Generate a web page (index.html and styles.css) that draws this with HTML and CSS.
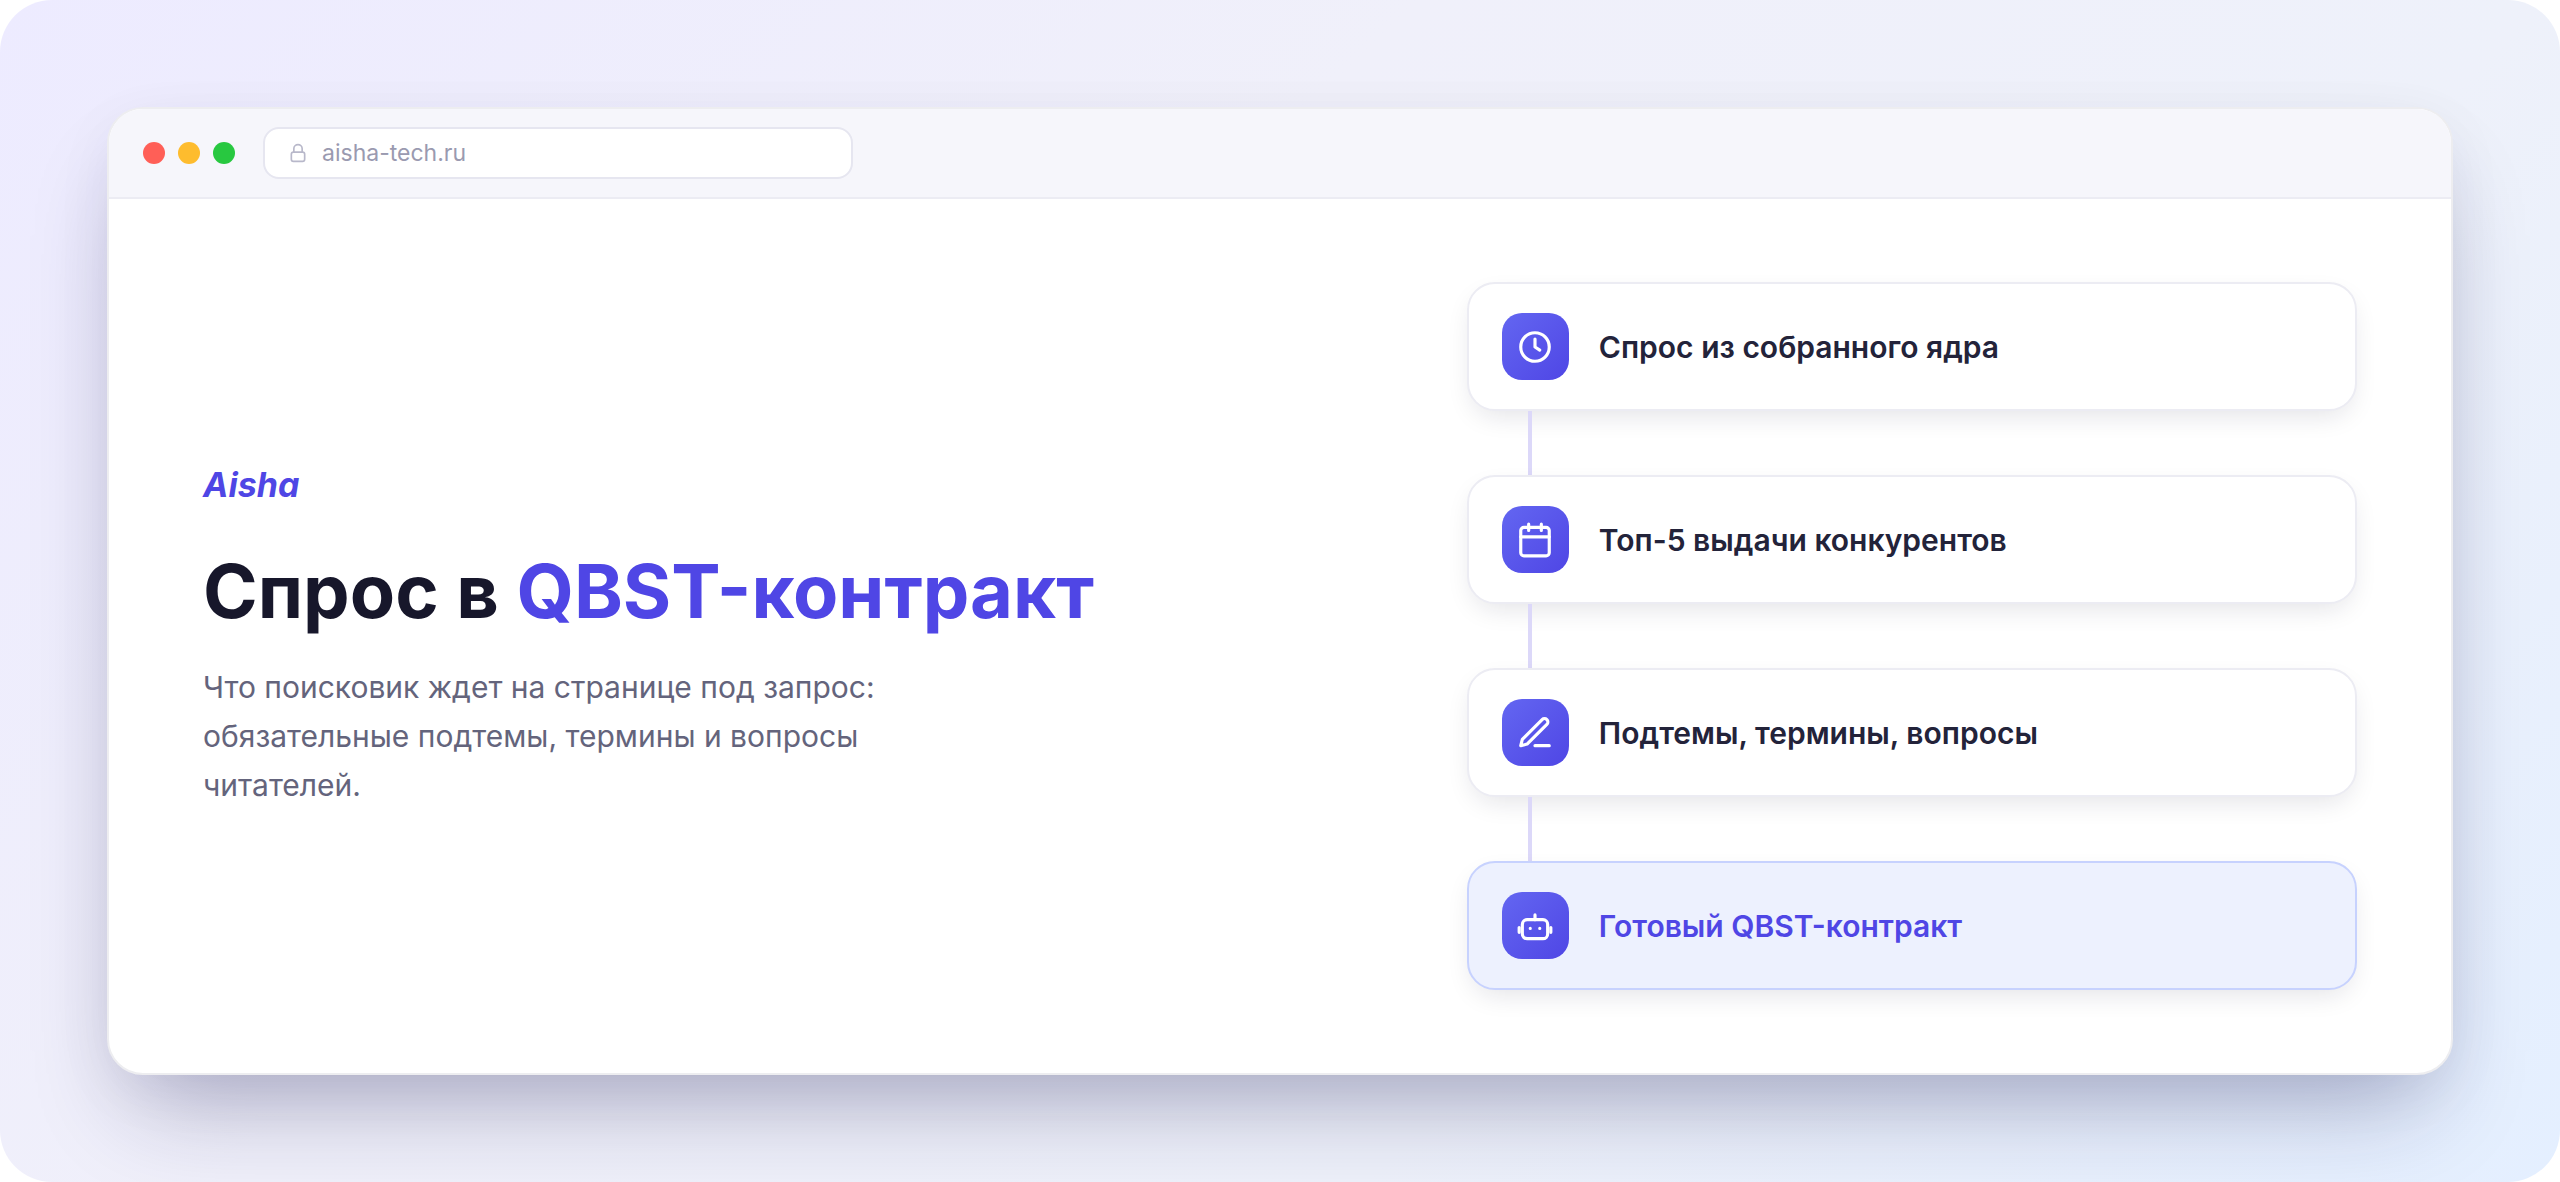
FILE: index.html
```html
<!DOCTYPE html>
<html lang="ru">
<head>
    <meta charset="UTF-8">
    <meta name="viewport" content="width=device-width, initial-scale=1.0">
    <title>Aisha</title>
    <link rel="stylesheet" href="styles.css">
</head>
<body>

    <div class="stage">
        <div class="window">

            <!-- Browser bar -->
            <header class="bar">
                <div class="dots">
                    <span class="dot red"></span>
                    <span class="dot yellow"></span>
                    <span class="dot green"></span>
                </div>
                <div class="address">
                    <svg class="lock" viewBox="0 0 24 24">
                        <rect x="4" y="11" width="16" height="11" rx="2.5"/>
                        <path d="M7 11V7a5 5 0 0 1 10 0v4"/>
                    </svg>
                    <span>aisha-tech.ru</span>
                </div>
            </header>

            <main class="content">
                <!-- Intro -->
                <section class="intro">
                    <p class="brand">Aisha</p>
                    <h1>Спрос в <span>QBST-контракт</span></h1>
                    <p class="lead">Что поисковик ждет на странице под запрос: обязательные подтемы, термины и вопросы читателей.</p>
                </section>

                <!-- Steps -->
                <ol class="steps">
                    <li class="step">
                        <span class="icon">
                            <svg viewBox="0 0 24 24">
                                <circle cx="12" cy="12" r="9"/>
                                <path d="M12 7v5l3 2"/>
                            </svg>
                        </span>
                        <span>Спрос из собранного ядра</span>
                    </li>
                    <li class="step">
                        <span class="icon">
                            <svg viewBox="0 0 24 24">
                                <rect x="3" y="4" width="18" height="18" rx="2"/>
                                <path d="M8 2v4M16 2v4M3 10h18"/>
                            </svg>
                        </span>
                        <span>Топ-5 выдачи конкурентов</span>
                    </li>
                    <li class="step">
                        <span class="icon">
                            <svg viewBox="0 0 24 24">
                                <path d="M12 20h9"/>
                                <path d="M16.500 3.500a2.120 2.120 0 0 1 3 3L7 19l-4 1 1-4z"/>
                            </svg>
                        </span>
                        <span>Подтемы, термины, вопросы</span>
                    </li>
                    <li class="step final">
                        <span class="icon">
                            <svg viewBox="0 0 24 24">
                                <rect x="4" y="8" width="16" height="12" rx="3"/>
                                <path d="M12 8V5M2 13v3M22 13v3M9 13.500v.01M15 13.500v.01"/>
                            </svg>
                        </span>
                        <span>Готовый QBST-контракт</span>
                    </li>
                </ol>
            </main>

        </div>
    </div>

</body>
</html>
```
FILE: styles.css
```css
* {
    margin: 0;
    padding: 0;
    box-sizing: border-box;
}

body {
    font-family: Inter, sans-serif;
    background-color: #fff;
}

.stage {
    display: flex;
    min-height: 100vh;
    padding: 107px;
    border-radius: 52px;
    background: linear-gradient(135deg, #edebff 0%, #f0f0fa 38%, #eef1fa 68%, #e4efff 100%);
    overflow: hidden;
}

.window {
    flex: 1;
    display: flex;
    flex-direction: column;
    border: 2px solid #ededf0;
    border-radius: 36px;
    background-color: #fff;
    box-shadow: 0 52px 100px -28px rgba(24, 24, 80, 0.32), 0 16px 60px rgba(24, 24, 80, 0.05);
}

/* Browser bar */
.bar {
    display: flex;
    align-items: center;
    gap: 28px;
    padding: 18px 34px;
    border-bottom: 2px solid #ececf3;
    border-radius: 34px 34px 0 0;
    background-color: #f6f6fb;
}

.dots {
    display: flex;
    gap: 13px;
}

.dot {
    width: 22px;
    height: 22px;
    border-radius: 50%;
}

.red {
    background-color: #ff5f57;
}

.yellow {
    background-color: #febc2e;
}

.green {
    background-color: #28c840;
}

.address {
    display: flex;
    align-items: center;
    gap: 14px;
    width: 590px;
    height: 52px;
    padding: 0 23px;
    border: 2px solid #e6e6f0;
    border-radius: 16px;
    background-color: #fff;
    color: #9a9ab0;
    font-size: 23px;
}

.lock {
    width: 20px;
    height: 20px;
    fill: none;
    stroke: #b8b8ca;
    stroke-width: 2;
}

/* Content */
.content {
    flex: 1;
    display: grid;
    grid-template-columns: 1.33fr 1fr;
    gap: 80px;
    align-items: center;
    padding: 0 94px;
}

.brand {
    margin-bottom: 40px;
    color: #4f46e5;
    font-size: 34px;
    font-style: italic;
    font-weight: 700;
    line-height: 44px;
}

h1 {
    margin-bottom: 28px;
    color: #17172b;
    font-size: 74px;
    font-weight: 700;
    line-height: 88px;
}

h1 span {
    color: #4f46e5;
}

.lead {
    max-width: 700px;
    color: #64647c;
    font-size: 30px;
    line-height: 49px;
}

/* Steps */
.steps {
    display: flex;
    flex-direction: column;
    gap: 64px;
    list-style: none;
}

.step {
    position: relative;
    display: flex;
    align-items: center;
    gap: 30px;
    padding: 29px 33px;
    border: 2px solid #ececf3;
    border-radius: 28px;
    background-color: #fff;
    box-shadow: 0 10px 28px -8px rgba(24, 24, 50, 0.14);
    color: #23233a;
    font-size: 30px;
    font-weight: 600;
}

/* line to the next step */
.step:not(:last-child)::after {
    content: "";
    position: absolute;
    top: 100%;
    left: 59px;
    width: 4px;
    height: 64px;
    margin-top: 2px;
    background-color: #dcd8f9;
}

.final {
    border-color: #c7d2fe;
    background-color: #edf1fe;
    color: #4f46e5;
}

.icon {
    display: flex;
    align-items: center;
    justify-content: center;
    width: 67px;
    height: 67px;
    border-radius: 20px;
    background: linear-gradient(135deg, #6366f1, #4f46e5);
}

.icon svg {
    width: 38px;
    height: 38px;
    fill: none;
    stroke: #fff;
    stroke-width: 2;
    stroke-linecap: round;
    stroke-linejoin: round;
}
```
